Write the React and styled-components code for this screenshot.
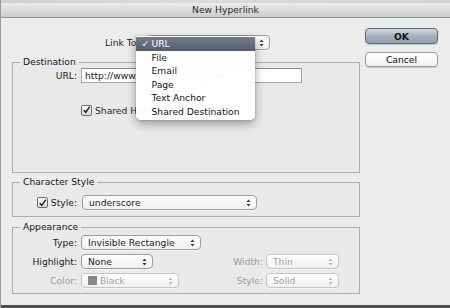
import React from "react";
import styled, { createGlobalStyle } from "styled-components";

const GlobalStyle = createGlobalStyle`
  html, body {
    margin: 0;
    padding: 0;
    background: #ececec;
  }
  body {
    font-family: "DejaVu Sans", "Liberation Sans", sans-serif;
    font-size: 9.2px;
    color: #1c1c1c;
  }
`;

const linkOptions = ["URL", "File", "Email", "Page", "Text Anchor", "Shared Destination"];

const Stepper = ({ disabled }) => (
  <StepperIcon width="5" height="8" viewBox="0 0 5 8">
    <polygon points="2.5,0.5 0.5,3 4.5,3" fill={disabled ? "#b8b8b8" : "#3a3a3a"} />
    <polygon points="0.5,5 4.5,5 2.5,7.5" fill={disabled ? "#b8b8b8" : "#3a3a3a"} />
  </StepperIcon>
);

const Check = () => (
  <CheckBox>
    <svg width="10" height="10" viewBox="0 0 10 10">
      <path d="M2 5.2 L4.2 7.6 L8.6 1.2" fill="none" stroke="#1a1a1a" strokeWidth="1.6" />
    </svg>
  </CheckBox>
);

const App = () => {
  return (
    <Window>
      <GlobalStyle />
      <TopStrip />
      <TitleBar>New Hyperlink</TitleBar>
      <Body>
        <LeftColumn>
          <LinkToRow>
            <span>Link To:</span>
            <Popup $width={124}>
              <Stepper />
              <Menu>
                {linkOptions.map((opt, i) => (
                  <MenuItem key={opt} $active={i === 0}>
                    {i === 0 && <MenuCheck>✓</MenuCheck>}
                    {opt}
                  </MenuItem>
                ))}
              </Menu>
            </Popup>
          </LinkToRow>

          <Group $mt={7} $pt={1} $pb={56}>
            <Legend>Destination</Legend>
            <Row>
              <Label>URL:</Label>
              <TextField>http://www.yourpublishing.com</TextField>
            </Row>
            <Row $mt={21} $h={12}>
              <Label />
              <Check />
              <CheckText>Shared Hyperlink Destination</CheckText>
            </Row>
          </Group>

          <Group $mt={4} $pt={8} $pb={6}>
            <Legend>Character Style</Legend>
            <Row>
              <Label>
                <Check />
                <CheckText>Style:</CheckText>
              </Label>
              <Popup $width={175} $ml={1}>
                underscore
                <Stepper />
              </Popup>
            </Row>
          </Group>

          <Group $mt={5} $pt={3} $pb={5}>
            <Legend>Appearance</Legend>
            <Row>
              <Label>Type:</Label>
              <Popup $width={120}>
                Invisible Rectangle
                <Stepper />
              </Popup>
            </Row>
            <Row $mt={4}>
              <Label>Highlight:</Label>
              <Cell>
                <Popup $width={72}>
                  None
                  <Stepper />
                </Popup>
              </Cell>
              <SideLabel $disabled>Width:</SideLabel>
              <Popup $width={73} $disabled>
                Thin
                <Stepper disabled />
              </Popup>
            </Row>
            <Row $mt={4}>
              <Label $disabled>Color:</Label>
              <Cell>
                <Popup $width={98} $disabled>
                  <Swatch />
                  Black
                  <Stepper disabled />
                </Popup>
              </Cell>
              <SideLabel $disabled>Style:</SideLabel>
              <Popup $width={73} $disabled>
                Solid
                <Stepper disabled />
              </Popup>
            </Row>
          </Group>
        </LeftColumn>

        <RightColumn>
          <Button $primary>OK</Button>
          <Button>Cancel</Button>
        </RightColumn>
      </Body>
      <BottomBar />
    </Window>
  );
};

export default App;

const Window = styled.div`
  width: 450px;
  height: 308px;
  display: flex;
  flex-direction: column;
  overflow: hidden;
  box-sizing: border-box;
  border-left: 1px solid #9a9a9a;
`;

const TopStrip = styled.div`
  height: 3px;
  background: linear-gradient(to right, #cfcfcf, #dcdcdc 40%, #d2d2d2);
`;

const TitleBar = styled.div`
  height: 14px;
  line-height: 14px;
  text-align: center;
  color: #2a2a2a;
  background: linear-gradient(#ebebeb, #cdcdcd);
  border-bottom: 1px solid #8e8e8e;
`;

const Body = styled.div`
  flex: 1;
  display: flex;
  background: #ececec;
`;

const LeftColumn = styled.div`
  width: 348px;
  padding: 17px 0 0 11px;
  display: flex;
  flex-direction: column;
`;

const RightColumn = styled.div`
  padding: 10px 0 0 5px;
  display: flex;
  flex-direction: column;
  gap: 8px;
`;

const BottomBar = styled.div`
  height: 3px;
  background: #4f4f4f;
`;

const LinkToRow = styled.div`
  display: flex;
  align-items: center;
  gap: 6px;
  height: 15px;
  padding-left: 93px;
`;

const Group = styled.fieldset`
  margin: ${(p) => p.$mt}px 0 0 0;
  padding: ${(p) => p.$pt}px 0 ${(p) => p.$pb}px 0;
  min-width: 0;
  border: 1px solid #adadad;
  background: #e9e9e9;
`;

const Legend = styled.legend`
  margin-left: 7px;
  padding: 0 3px;
  line-height: 10px;
  color: #161616;
`;

const Row = styled.div`
  display: flex;
  align-items: center;
  height: ${(p) => p.$h || 15}px;
  margin-top: ${(p) => p.$mt || 0}px;
`;

const Label = styled.div`
  width: 64px;
  padding-right: 4px;
  box-sizing: content-box;
  display: flex;
  align-items: center;
  justify-content: flex-end;
  color: ${(p) => (p.$disabled ? "#9b9b9b" : "#1c1c1c")};
  flex-shrink: 0;
`;

const Cell = styled.div`
  width: 130px;
  flex-shrink: 0;
`;

const SideLabel = styled.div`
  width: 52px;
  text-align: right;
  padding-right: 3px;
  color: ${(p) => (p.$disabled ? "#9b9b9b" : "#1c1c1c")};
`;

const Popup = styled.div`
  position: relative;
  box-sizing: border-box;
  width: ${(p) => p.$width}px;
  height: 15px;
  margin-left: ${(p) => p.$ml || 0}px;
  display: flex;
  align-items: center;
  padding-left: 6px;
  border: 1px solid ${(p) => (p.$disabled ? "#c6c6c6" : "#9c9c9c")};
  border-radius: 4px;
  background: linear-gradient(#ffffff, #f0f0f0);
  color: ${(p) => (p.$disabled ? "#a2a2a2" : "#1c1c1c")};
  box-shadow: 0 1px 0 rgba(255, 255, 255, 0.6);
  white-space: nowrap;
`;

const StepperIcon = styled.svg`
  margin-left: auto;
  margin-right: 5px;
  flex-shrink: 0;
`;

const Swatch = styled.span`
  width: 9px;
  height: 9px;
  margin-right: 3px;
  background: #8a8a8a;
  flex-shrink: 0;
`;

const TextField = styled.div`
  box-sizing: border-box;
  width: 221px;
  height: 15px;
  padding-left: 3px;
  line-height: 13px;
  background: #ffffff;
  border: 1px solid #a3a3a3;
  border-top-color: #8c8c8c;
  white-space: nowrap;
  overflow: hidden;
`;

const CheckBox = styled.span`
  box-sizing: border-box;
  width: 11px;
  height: 11px;
  display: inline-flex;
  align-items: center;
  justify-content: center;
  border: 1px solid #6f6f6f;
  border-radius: 2px;
  background: linear-gradient(#ffffff, #d9d9d9);
  flex-shrink: 0;
`;

const CheckText = styled.span`
  margin-left: 3px;
  white-space: nowrap;
`;

const Menu = styled.div`
  position: absolute;
  left: -11px;
  top: 0px;
  width: 119px;
  padding: 1px 0 2px;
  background: rgba(255, 255, 255, 0.965);
  border-radius: 0 0 5px 5px;
  box-shadow: 0 4px 10px rgba(0, 0, 0, 0.35), 0 0 0 1px rgba(0, 0, 0, 0.06);
  z-index: 2;
`;

const MenuItem = styled.div`
  position: relative;
  height: 13.5px;
  line-height: 13.5px;
  padding-left: 16px;
  color: ${(p) => (p.$active ? "#ffffff" : "#151515")};
  background: ${(p) => (p.$active ? "linear-gradient(#737d8b, #535d6c)" : "transparent")};
`;

const MenuCheck = styled.span`
  position: absolute;
  left: 6px;
  top: 0;
`;

const Button = styled.div`
  box-sizing: border-box;
  width: 73px;
  height: ${(p) => (p.$primary ? 16 : 15)}px;
  display: flex;
  align-items: center;
  justify-content: center;
  border-radius: 4px;
  border: 1px solid ${(p) => (p.$primary ? "#5f6a79" : "#9a9a9a")};
  background: ${(p) =>
    p.$primary
      ? "linear-gradient(#d3d9e1, #a3aebc 55%, #95a1b1)"
      : "linear-gradient(#ffffff, #f1f1f1)"};
  color: #111;
  font-weight: ${(p) => (p.$primary ? "bold" : "normal")};
  box-shadow: 0 1px 1px rgba(0, 0, 0, 0.15);
`;
